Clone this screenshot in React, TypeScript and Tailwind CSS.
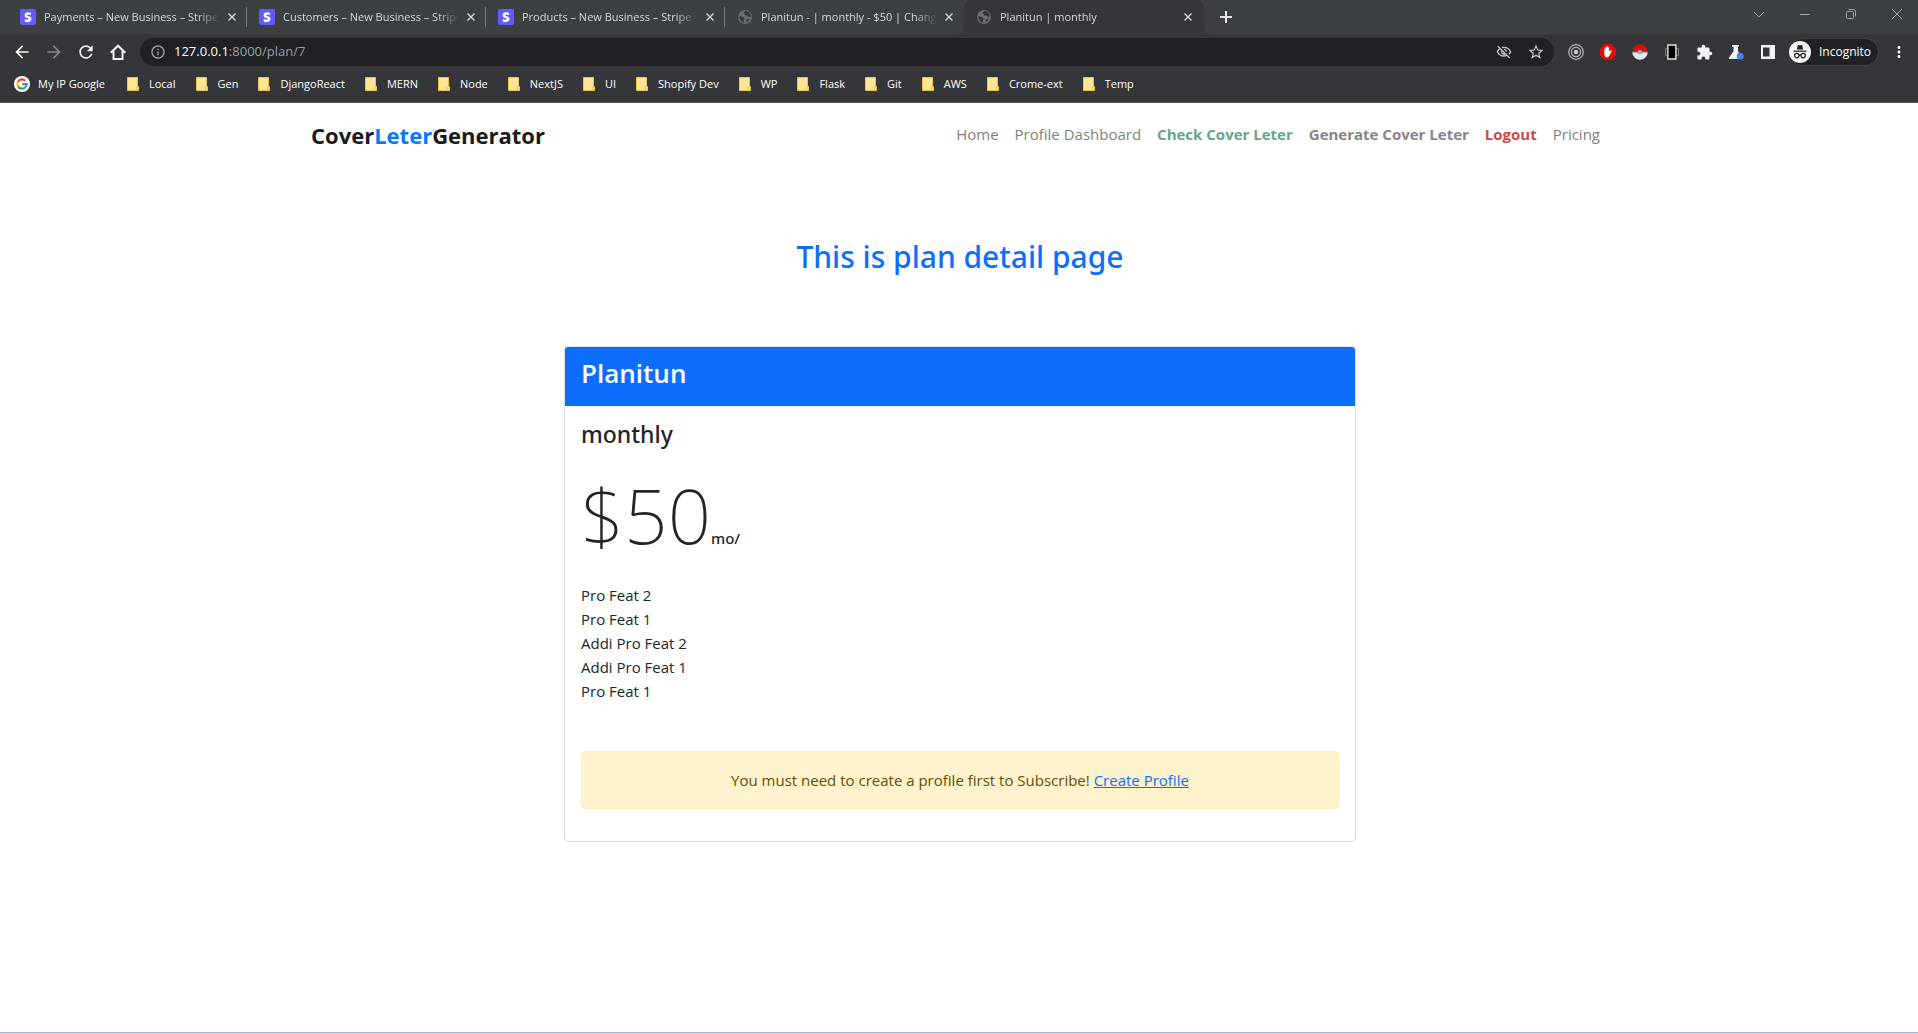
import React from "react";
import {
  MdArrowBack,
  MdArrowForward,
  MdExtension,
  MdInfoOutline,
  MdMoreVert,
  MdOutlineVisibilityOff,
  MdRefresh,
  MdStarBorder,
} from "react-icons/md";

type Favicon = "stripe" | "globe";

const tabs: { title: string; icon: Favicon; active?: boolean }[] = [
  { title: "Payments – New Business – Stripe", icon: "stripe" },
  { title: "Customers – New Business – Stripe", icon: "stripe" },
  { title: "Products – New Business – Stripe", icon: "stripe" },
  { title: "Planitun - | monthly - $50 | Change", icon: "globe" },
  { title: "Planitun | monthly", icon: "globe", active: true },
];

const bookmarks = [
  "Local",
  "Gen",
  "DjangoReact",
  "MERN",
  "Node",
  "NextJS",
  "UI",
  "Shopify Dev",
  "WP",
  "Flask",
  "Git",
  "AWS",
  "Crome-ext",
  "Temp",
];

const features = ["Pro Feat 2", "Pro Feat 1", "Addi Pro Feat 2", "Addi Pro Feat 1", "Pro Feat 1"];

function StripeIcon() {
  return (
    <svg viewBox="0 0 16 16" className="size-4 shrink-0" aria-hidden="true">
      <rect width="16" height="16" rx="2" fill="#635bff" />
      <path
        d="M7.3 6.2c0-.4.35-.6.9-.6.85 0 1.85.25 2.7.7V3.7a7 7 0 0 0-2.7-.5C6 3.200 4.600 4.350 4.600 6.300c0 3 4.100 2.500 4.100 3.800 0 .5-.4.65-1 .65-.9 0-2.050-.35-2.950-.85v2.650c1 .42 2 .6 2.950.6 2.200 0 3.750-1.100 3.750-3.050C11.450 6.900 7.300 7.450 7.300 6.200z"
        fill="#fff"
      />
    </svg>
  );
}

function GlobeIcon() {
  return (
    <svg viewBox="0 0 16 16" className="size-4 shrink-0" aria-hidden="true">
      <circle cx="8" cy="8" r="7" fill="#696c70" />
      <path
        d="M2.300 7.200c1.600 0 2.700.2 3.500 1.100.5.6 1.500.3 1.700 1.100.2.900-.9 1.100-.8 2.200.1.700.5 1 .4 2A6 6 0 0 1 2.300 7.200zM8.500 2.100c-.4.700-1.600.7-1.600 1.600 0 .8 1 .8.900 1.600-.1.900 1 1.200 2 1.200 1.200 0 1.100 1.200 2 1.400.9.200 1.600-.2 2.100-.4A6 6 0 0 0 8.500 2.100zM10 10.300c.8-.5 2-.4 2.600.2-.6 1.200-1.500 2-2.600 2.600-.6-.9-.8-2.200 0-2.800z"
        fill="#35363a"
      />
    </svg>
  );
}

function CloseIcon({ className }: { className: string }) {
  return (
    <svg viewBox="0 0 16 16" className={className} fill="none" stroke="currentColor" aria-hidden="true">
      <path d="M4 4l8 8M12 4l-8 8" strokeWidth="1.600" />
    </svg>
  );
}

function FolderIcon() {
  return (
    <svg viewBox="0 0 12 14" className="h-[14px] w-3 shrink-0" aria-hidden="true">
      <path d="M.5.5h10v9h1v4H.5z" fill="#ffe694" stroke="#e8c34a" />
      <path d="M9.500 9.500v4" stroke="#e8c34a" />
    </svg>
  );
}

function GoogleIcon() {
  return (
    <svg viewBox="0 0 16 16" className="size-4 shrink-0" aria-hidden="true">
      <circle cx="8" cy="8" r="8" fill="#fff" />
      <g fill="none" strokeWidth="2.200">
        <path d="M4 5.700A4.700 4.700 0 0 1 11.300 4.700" stroke="#ea4335" />
        <path d="M4 5.700A4.700 4.700 0 0 0 4 10.400" stroke="#fbbc05" />
        <path d="M4 10.400A4.700 4.700 0 0 0 11.200 11.500" stroke="#34a853" />
        <path d="M8.200 8.100h4.500A4.700 4.700 0 0 1 11.200 11.500" stroke="#4285f4" />
      </g>
    </svg>
  );
}

function HomeIcon() {
  return (
    <svg viewBox="0 0 16 16" className="size-4" fill="none" stroke="currentColor" strokeWidth="2" aria-hidden="true">
      <path d="M.7 8.700L8 1.700l7.300 7M3.500 7v8h9V7" />
    </svg>
  );
}

function TargetIcon() {
  return (
    <svg viewBox="0 0 16 16" className="size-4" fill="none" stroke="#b5b7b9" aria-hidden="true">
      <circle cx="8" cy="8" r="7.300" strokeWidth="1.200" />
      <circle cx="8" cy="8" r="4.600" strokeWidth="1.300" />
      <circle cx="8" cy="8" r="2.200" fill="#c9cbcd" stroke="none" />
    </svg>
  );
}

function StopHandIcon() {
  return (
    <svg viewBox="0 0 16 16" className="size-4" aria-hidden="true">
      <path d="M4.700 0h6.600L16 4.700v6.600L11.300 16H4.700L0 11.300V4.700z" fill="#e40d0d" />
      <path
        d="M4.300 8.300V5.200c0-.8 1-.8 1 0V3.600c0-.9 1.200-.9 1.200 0V2.900c0-.9 1.300-.9 1.300 0v.7c0-.9 1.300-.9 1.300 0v4.200l1-1.200c.7-.7 1.900-.4 1.600.3-.9 1.700-1.400 3.500-2.300 4.800-.7 1-1.500 1.500-2.700 1.500-1.900 0-2.400-1.900-2.400-4.900z"
        fill="#fff"
      />
    </svg>
  );
}

function PokeballIcon() {
  return (
    <svg viewBox="0 0 16 16" className="size-4" aria-hidden="true">
      <path d="M.5 7.500a7.500 7.200 0 0 1 15 0z" fill="#d90b0b" />
      <path d="M.3 8.200a7.700 7.500 0 0 0 15.400 0z" fill="#dfe8ea" />
      <path d="M.3 7.300h15.400v.9H.3z" fill="#8a6a6c" />
      <circle cx="8" cy="8" r="2.300" fill="#8d9294" />
      <circle cx="8" cy="8" r="1.200" fill="#b9bec0" />
    </svg>
  );
}

function PhoneFrameIcon() {
  return (
    <svg viewBox="0 0 16 16" className="size-4" fill="none" aria-hidden="true">
      <path d="M1.500 4.500h13v7h-13z" stroke="#77797c" />
      <path d="M3.900 1h8v14h-8z" fill="#000" stroke="#e6e3da" strokeWidth="1.400" />
    </svg>
  );
}

function FlaskIcon() {
  return (
    <svg viewBox="0 0 16 16" className="size-4" aria-hidden="true">
      <path d="M4 1h7v1.800h-1v4.400l4.200 6.300c.5.800.1 1.500-.8 1.500H1.900c-.9 0-1.300-.7-.8-1.500L5.500 7.200V2.800H4z" fill="#f1f3f4" />
      <circle cx="12.200" cy="12.200" r="3.400" fill="#4285f4" />
    </svg>
  );
}

function SidePanelIcon() {
  return (
    <svg viewBox="0 0 14 14" className="size-[14px]" aria-hidden="true">
      <path d="M0 0h14v14H0zM2 2.500v9h6.500v-9z" fill="#f1f3f4" fillRule="evenodd" />
    </svg>
  );
}

function IncognitoIcon() {
  return (
    <svg viewBox="0 0 22 22" className="size-[22px]" aria-hidden="true">
      <circle cx="11" cy="11" r="11" fill="#f1f3f4" />
      <path d="M7.800 8.600l1-4c.1-.5.500-.6.900-.5l1.300.4 1.300-.4c.4-.1.800 0 .9.500l1 4z" fill="#202124" />
      <path d="M4.500 9.600h13v1.200h-13z" fill="#202124" />
      <g fill="none" stroke="#202124" strokeWidth="1.200">
        <circle cx="7.800" cy="14.600" r="2.200" />
        <circle cx="14.200" cy="14.600" r="2.200" />
        <path d="M10 14.300c.6-.5 1.400-.5 2 0" />
      </g>
    </svg>
  );
}

function ToolButton({ label, children }: { label: string; children: React.ReactNode }) {
  return (
    <button type="button" aria-label={label} className="flex size-8 items-center justify-center text-[#f1f3f4]">
      {children}
    </button>
  );
}

function WindowButton({ label, d }: { label: string; d: string }) {
  return (
    <button type="button" aria-label={label} className="flex h-7 w-[42px] items-center justify-center text-[#a3a5a7]">
      <svg viewBox="0 0 12 12" className="size-3" fill="none" stroke="currentColor" aria-hidden="true">
        <path d={d} />
      </svg>
    </button>
  );
}

function TabStrip() {
  return (
    <div className="flex h-[34px] items-stretch bg-[#3c4043] pl-2">
      <div role="tablist" className="flex min-w-0">
        {tabs.map((tab, i) => (
          <div
            key={tab.title}
            className={
              tab.active
                ? "relative flex w-60 items-center rounded-t-lg bg-[#35363a] pl-3 before:absolute before:bottom-0 before:-left-2 before:size-2 before:bg-[radial-gradient(circle_at_0_0,transparent_8px,#35363a_8px)] after:absolute after:-right-2 after:bottom-0 after:size-2 after:bg-[radial-gradient(circle_at_100%_0,transparent_8px,#35363a_8px)]"
                : "flex w-[239px] items-center pl-3"
            }
          >
            <button
              type="button"
              role="tab"
              aria-selected={!!tab.active}
              className="flex w-[202px] items-center gap-2 text-left text-[11px] text-[#d5d7da]"
            >
              {tab.icon === "stripe" ? <StripeIcon /> : <GlobeIcon />}
              <span className="w-[178px] overflow-hidden whitespace-nowrap [mask-image:linear-gradient(to_right,#000_154px,transparent_176px)]">
                {tab.title}
              </span>
            </button>
            <button type="button" aria-label="Close tab" className="ml-[3px] text-[#d5d7da]">
              <CloseIcon className="size-[14px]" />
            </button>
            {i < 3 && <span className="ml-auto h-5 w-px bg-[#7a7d80]" />}
          </div>
        ))}
      </div>
      <button type="button" aria-label="New tab" className="ml-4 text-[#e3e5e8]">
        <svg viewBox="0 0 12 12" className="size-3" stroke="currentColor" strokeWidth="2" aria-hidden="true">
          <path d="M6 0v12M0 6h12" />
        </svg>
      </button>
      <div className="ml-auto flex gap-1">
        <WindowButton label="Search tabs" d="M1 4l5 5 5-5" />
        <WindowButton label="Minimize" d="M1 6.500h10" />
        <WindowButton label="Restore" d="M1.500 4.500a1 1 0 0 1 1-1h5a1 1 0 0 1 1 1v5a1 1 0 0 1-1 1h-5a1 1 0 0 1-1-1zM3.500 1.500h5a2 2 0 0 1 2 2v5" />
        <WindowButton label="Close" d="M1 1l10 10M11 1L1 11" />
      </div>
    </div>
  );
}

function Toolbar() {
  return (
    <div className="flex h-9 items-center bg-[#35363a] pr-[3px] pl-[6px]">
      <ToolButton label="Back">
        <MdArrowBack size={20} />
      </ToolButton>
      <button type="button" aria-label="Forward" className="flex size-8 items-center justify-center text-[#85878a]">
        <MdArrowForward size={20} />
      </button>
      <ToolButton label="Reload">
        <MdRefresh size={20} />
      </ToolButton>
      <ToolButton label="Home">
        <HomeIcon />
      </ToolButton>
      <div className="ml-[6px] flex h-7 grow items-center rounded-full bg-[#202124] pl-[10px] text-[13px]">
        <MdInfoOutline size={16} className="shrink-0 text-[#9aa0a6]" />
        <a href="#plan" aria-label="Address" className="ml-2 grow text-[#9aa0a6]">
          <span className="text-white">127.0.0.1</span>:8000/plan/7
        </a>
        <button type="button" aria-label="Third-party cookies blocked" className="flex w-8 justify-center text-[#c8cacc]">
          <MdOutlineVisibilityOff size={16} />
        </button>
        <button type="button" aria-label="Bookmark this tab" className="mr-[2px] flex w-8 justify-center text-[#c8cacc]">
          <MdStarBorder size={18} />
        </button>
      </div>
      <div className="ml-[6px] flex items-center">
        <ToolButton label="Recorder">
          <TargetIcon />
        </ToolButton>
        <ToolButton label="Ad blocker">
          <StopHandIcon />
        </ToolButton>
        <ToolButton label="Pokeball">
          <PokeballIcon />
        </ToolButton>
        <ToolButton label="Device preview">
          <PhoneFrameIcon />
        </ToolButton>
        <ToolButton label="Extensions">
          <MdExtension size={17} />
        </ToolButton>
        <ToolButton label="Experiments">
          <FlaskIcon />
        </ToolButton>
        <ToolButton label="Side panel">
          <SidePanelIcon />
        </ToolButton>
        <button
          type="button"
          className="ml-1 flex h-7 w-[91px] items-center gap-2 rounded-full border border-[#3f4145] bg-[#202124] text-xs text-white"
        >
          <IncognitoIcon />
          Incognito
        </button>
        <button type="button" aria-label="Menu" className="ml-1 flex size-8 items-center justify-center text-[#f1f3f4]">
          <MdMoreVert size={18} />
        </button>
      </div>
    </div>
  );
}

function BookmarksBar() {
  return (
    <nav
      aria-label="Bookmarks"
      className="flex h-[33px] items-center gap-5 border-b border-[#5b5c60] bg-[#35363a] pb-1 pl-[14px] text-[11px] whitespace-nowrap text-white"
    >
      <a href="#google" className="mr-[2px] flex items-center gap-2">
        <GoogleIcon />
        My IP Google
      </a>
      {bookmarks.map((name) => (
        <a key={name} href="#folder" className="flex items-center gap-[10px]">
          <FolderIcon />
          {name}
        </a>
      ))}
    </nav>
  );
}

function SiteHeader() {
  return (
    <header className="mx-auto flex w-full max-w-[1320px] items-start justify-between px-3 pt-3">
      <a href="#home" className="text-[22px] leading-10 font-bold text-[#1a1a1a]">
        Cover<span className="text-[#007bff]">Leter</span>Generator
      </a>
      <nav aria-label="Main" className="flex gap-4 pt-[7px] pr-[7px] text-[15px] leading-6 text-[#7f7f7f]">
        <a href="#home">Home</a>
        <a href="#profile">Profile Dashboard</a>
        <a href="#check" className="font-bold text-[#66a587]">Check Cover Leter</a>
        <a href="#generate" className="font-bold text-[#858585]">Generate Cover Leter</a>
        <a href="#logout" className="font-bold text-[#c94a4a]">Logout</a>
        <a href="#pricing">Pricing</a>
      </nav>
    </header>
  );
}

function PlanCard() {
  return (
    <section className="mx-auto mt-[69px] w-full max-w-[792px] rounded border border-[#dfdfdf] bg-white">
      <div className="h-[59px] rounded-t-[3px] border-b border-[#0c63e4] bg-[#0d6efd] px-4 pt-2">
        <h2 className="text-[26px] leading-9 font-semibold text-white">Planitun</h2>
      </div>
      <div className="px-4 pt-3 pb-8">
        <h3 className="font-['Noto_Sans'] text-[23px] leading-8 font-medium">monthly</h3>
        <p className="mt-[17px] flex items-baseline">
          <span className="font-['Noto_Sans'] text-[76px] leading-24 font-extralight">$50</span>
          <span className="font-['Noto_Sans'] text-[15px] leading-6 font-medium">mo/</span>
        </p>
        <ul className="mt-5 text-[15px] leading-6">
          {features.map((feature, i) => (
            <li key={i}>{feature}</li>
          ))}
        </ul>
        <div className="mt-12 rounded border border-[#ffecb5] bg-[#fff3cd] py-4 text-center text-[15px] leading-6 text-[#664d03]">
          You must need to create a profile first to Subscribe!{" "}
          <a href="#create" className="text-[#0d6efd] underline">
            Create Profile
          </a>
        </div>
      </div>
    </section>
  );
}

export default function App() {
  return (
    <div className="flex min-h-screen flex-col bg-white font-['Open_Sans',sans-serif] text-[#212529]">
      <TabStrip />
      <Toolbar />
      <BookmarksBar />
      <SiteHeader />
      <main className="pl-[2px]">
        <h1 className="mt-[82px] text-center font-['Noto_Sans'] text-[30px] leading-10 font-medium text-[#0d6efd]">
          This is plan detail page
        </h1>
        <PlanCard />
      </main>
      <div className="mt-auto h-[2px] border-t border-[#a5b4cc] bg-[#dce8f5]" />
    </div>
  );
}
